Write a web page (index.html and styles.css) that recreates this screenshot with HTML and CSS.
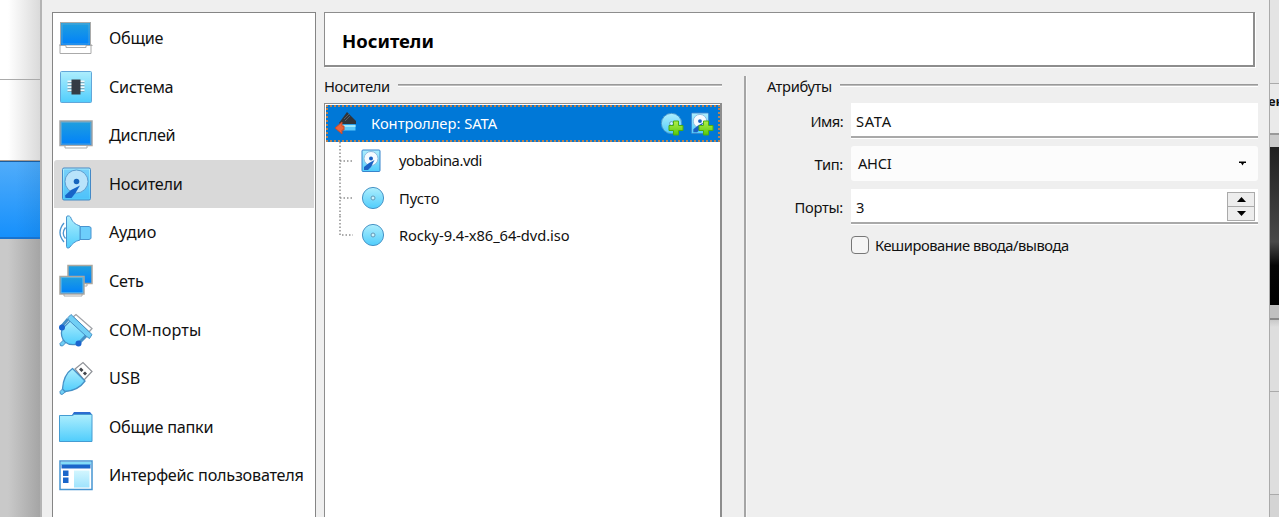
FILE: index.html
```html
<!DOCTYPE html>
<html lang="ru">
<head>
<meta charset="utf-8">
<title>Носители</title>
<link rel="stylesheet" href="styles.css">
</head>
<body>
<svg class="defs" width="0" height="0">
  <defs>
    <linearGradient id="screen" x1="0" y1="0" x2="0" y2="1"><stop offset="0" stop-color="#20a0dd"/><stop offset="1" stop-color="#0080fb"/></linearGradient>
    <linearGradient id="cyan" x1="0" y1="0" x2="0" y2="1"><stop offset="0" stop-color="#aeeefd"/><stop offset="1" stop-color="#50cdfc"/></linearGradient>
    <linearGradient id="green" x1="0" y1="0" x2="0" y2="1"><stop offset="0" stop-color="#b4ef4c"/><stop offset="1" stop-color="#55c80c"/></linearGradient>
    <symbol id="disc" viewBox="0 0 24 24"><circle cx="12" cy="12" r="10.6" fill="url(#cyan)" stroke="#4994c6"/><circle cx="12" cy="12" r="2" fill="#c9f3ff" stroke="#6599b5"/></symbol>
    <symbol id="hdd" viewBox="0 0 20 24"><rect x="1" y="1" width="18" height="21.5" rx="1" fill="url(#cyan)" stroke="#3984cc"/><circle cx="10" cy="9.5" r="7" fill="#f4fbff" stroke="#8ebde0"/><circle cx="10" cy="9.5" r="2" fill="#1b62c4"/><path d="M13.500 11L8 14 3 18v3h4l3-3z" fill="#1b62c4"/></symbol>
    <symbol id="plus" viewBox="0 0 16 16"><path d="M5.500 1h5v4.500h4.500v5h-4.500V15h-5v-4.500H1v-5h4.500z" fill="url(#green)" stroke="#4aad13"/></symbol>
  </defs>
</svg>
<div class="desktop">
  <div class="back-left"><div class="bl-top"></div><div class="bl-mid"></div><div class="bl-blue"></div><div class="bl-gray"></div></div>
  <main class="dialog">
    <nav class="sidebar">
      <div class="item"><svg width="36" height="36"><path d="M2 24v9.500h31V24" fill="#fff" stroke="#aaa"/><rect x="2.500" y="2.500" width="30" height="23" fill="url(#screen)" stroke="#a9aaa9"/><rect x="4" y="4" width="27" height="20" fill="none" stroke="#62a9d3" stroke-width=".7"/><path d="M1.500 25.500H8v2h20v-2h6.500" fill="#fff" stroke="#aaa"/></svg><span class="t1">Общие</span></div>
      <div class="item"><svg width="36" height="36"><rect x="2.500" y="2.500" width="31" height="31" rx="1" fill="url(#cyan)" stroke="#62a6d9"/><path d="M9.500 12.500h17M9.500 15.500h17M9.500 18.500h17M9.500 21.500h17" stroke="#f4f8fa" stroke-width="2"/><path d="M9.500 13.500h17M9.500 16.500h17M9.500 19.500h17M9.500 22.500h17" stroke="#6f9aaf" stroke-width=".8"/><rect x="13.500" y="10.500" width="9" height="15" fill="#343c45"/></svg><span class="t2">Система</span></div>
      <div class="item"><svg width="36" height="36"><rect x="2" y="4" width="32" height="24.500" fill="url(#screen)" stroke="#a6a6a6" stroke-width="1.500"/><rect x="3.500" y="5.500" width="29" height="21.500" fill="none" stroke="#62a9d3" stroke-width=".7"/><path d="M7 28.500v2.500h22v-2.500z" fill="#fff" stroke="#aaa"/></svg><span class="t3">Дисплей</span></div>
      <div class="item selected"><svg width="36" height="36"><rect x="4.500" y="2" width="28" height="32" rx="1.500" fill="url(#cyan)" stroke="#4489c6"/><rect x="6" y="3.500" width="25" height="29" fill="#4ab8f8" opacity=".55"/><circle cx="18.500" cy="15.500" r="11.500" fill="#b9e3fb" stroke="#5d9ed0"/><circle cx="18.500" cy="15.500" r="2.800" fill="#1764bd"/><path d="M22 19.500l-9 4.500-6 5.500.5 2.500h6l4-5z" fill="#1764c8"/></svg><span class="t4">Носители</span></div>
      <div class="item"><svg width="36" height="36"><path d="M22 12.500h9l2 1v11l-2 1h-9z" fill="#6dcefb" stroke="#4994cf"/><path d="M8.500 3c0-1.500 3-1.500 4 0 2 5 4 7 9.500 9v14c-5 1-8 4-10 7-1 1.500-3.500 1.500-3.500-.5z" fill="url(#cyan)" stroke="#4994cf"/><path d="M6 9q-8 9.500 0 19M7.500 13.500q-4.500 6 0 11" fill="none" stroke="#4994cf" stroke-width="1.300"/></svg><span class="t5">Аудио</span></div>
      <div class="item"><svg width="36" height="36"><path d="M15 21.500v1.500h14v-2.500" fill="#fff" stroke="#aaa"/><rect x="10" y="2.500" width="24" height="18" fill="url(#screen)" stroke="#aaa79f" stroke-width="1.500"/><path d="M6 31v2h18v-2" fill="#fff" stroke="#aaa"/><rect x="2" y="13.500" width="24" height="17.500" fill="url(#screen)" stroke="#aaa79f" stroke-width="1.500"/><rect x="3.200" y="14.700" width="21.600" height="15" fill="none" stroke="#68bce7" stroke-width=".7"/></svg><span class="t6">Сеть</span></div>
      <div class="item"><svg width="36" height="36"><path d="M15 5l3-2.500L34 16.500l-3 3.500z" fill="#fff" stroke="#a0a3a8" stroke-width="1.300"/><path d="M5.500 28L8 30.500 4.500 34q-3 .5-2.500-2.500z" fill="#71cff5" stroke="#4590c6"/><path d="M13 8L4 17q-2 8 3 13 5 4 13 2l8-9z" fill="url(#cyan)" stroke="#4590c6" stroke-width="1.300"/><path d="M10 5.500L13 2.500 34 22.500 31.500 26.500 28 24 10 7.500z" fill="#71cff5" stroke="#4590c6"/><path d="M10 7L4 14M28 24l-7 7" stroke="#4590c6" stroke-width="3"/><circle cx="4" cy="15.500" r="3" fill="#1a64cf"/><circle cx="20.500" cy="31.500" r="3" fill="#1a64cf"/></svg><span class="t7">COM-порты</span></div>
      <div class="item"><svg width="36" height="36"><path d="M17 9L25 2.500 34 11.500 26 20z" fill="#fff" stroke="#909399" stroke-width="1.200"/><path d="M23 7.500l2.500 2.500-2 2-2.500-2.500zM27 11.500l2 2-2 2-2.200-2.200z" fill="#42464c"/><path d="M5 28.500l3 3-4 3q-2.500 0-2-3z" fill="#71cff5" stroke="#4590c6"/><path d="M14.500 8.500L27 21C22 28 15 31 7 31.500L4.500 29C5 20 8 13 14.500 8.500z" fill="url(#cyan)" stroke="#4590c6" stroke-width="1.300"/></svg><span class="t8">USB</span></div>
      <div class="item"><svg width="36" height="36"><path d="M14 6l2-3h16l2 2.500V12H14z" fill="#2b6dd0"/><path d="M1.500 6.500h13l1.500-1h18v27h-32.500z" fill="url(#cyan)" stroke="#459cd2"/></svg><span class="t9">Общие папки</span></div>
      <div class="item"><svg width="36" height="36"><rect x="2" y="4" width="32" height="28.500" fill="#fff" stroke="#4595d2" stroke-width="1.500"/><path d="M3 5h30v3H3z" fill="#83dcf8"/><path d="M3.500 7.500h29v4h-29zM5 13.500h5.500V19H5zM5 20.500h5.500V26H5z" fill="#1b66ca"/><path d="M16 13.500h15.500v17H16z" fill="url(#cyan)" opacity=".55"/></svg><span class="t10">Интерфейс пользователя</span></div>
    </nav>
    <section class="content">
      <h1 class="title"><span>Носители</span></h1>
      <div class="columns">
        <section class="storage">
          <div class="legend"><span class="g1">Носители</span><i></i></div>
          <div class="tree">
            <div class="controller">
              <svg class="ctrl-icon" width="24" height="24"><path d="M5 12L13 1l9 9v3H6z" fill="#303439"/><path d="M10 8l5-5M11 10l5-5" stroke="#555c63"/><path d="M8 13.500h13.500v6H8z" fill="#5bc8fa"/><path d="M8 14h13.500v2H8z" fill="#9ee8fc"/><path d="M1 17l7-6v4h2v4H8v4z" fill="#ee6339" stroke="#c14b2d"/></svg>
              <span class="ctrl-name">Контроллер: SATA</span>
              <div class="actions">
                <svg width="25" height="24"><use href="#disc" x="0" y="0" width="23" height="23"/><use href="#plus" x="8" y="8" width="16" height="16"/></svg>
                <svg width="25" height="24"><use href="#hdd" x="0" y="0" width="20" height="23"/><use href="#plus" x="8" y="8" width="16" height="16"/></svg>
              </div>
            </div>
            <div class="leaf"><svg class="branch" width="14" height="38"><path d="M1 0v38M1 19h13"/></svg><svg class="media" width="24" height="24"><use href="#hdd" x="0" y="0" width="20" height="24"/></svg><span class="l1">yobabina.vdi</span></div>
            <div class="leaf"><svg class="branch" width="14" height="38"><path d="M1 0v38M1 19h13"/></svg><svg class="media" width="24" height="24"><use href="#disc"/></svg><span class="l2">Пусто</span></div>
            <div class="leaf"><svg class="branch" width="14" height="38"><path d="M1 0v19h13"/></svg><svg class="media" width="24" height="24"><use href="#disc"/></svg><span class="l3">Rocky-9.4-x86_64-dvd.iso</span></div>
          </div>
        </section>
        <div class="divider"></div>
        <section class="attributes">
          <div class="legend"><span class="g2">Атрибуты</span><i></i></div>
          <div class="form">
            <label><span class="f1">Имя:</span></label><div class="field"><span class="v1">SATA</span></div>
            <label><span class="f2">Тип:</span></label><div class="combo"><span class="v2">AHCI</span><svg width="8" height="5"><path d="M1 .5h7v1.500H6L4.500 4.500 3 2H1z"/></svg></div>
            <label><span class="f3">Порты:</span></label><div class="field"><span>3</span><div class="spin"><b><svg width="9" height="5"><path d="M4.500 0L9 5H0z"/></svg></b><b><svg width="9" height="5"><path d="M0 0h9L4.500 5z"/></svg></b></div></div>
          </div>
          <div class="check"><i></i><span class="c1">Кеширование ввода/вывода</span></div>
        </section>
      </div>
    </section>
  </main>
  <div class="back-right"><div class="br-top"></div><div class="br-label">ен</div><div class="br-bar"></div><div class="br-black"></div><div class="br-foot"></div><div class="br-a"></div><div class="br-b"></div><div class="br-c"></div></div>
</div>
</body>
</html>
```
FILE: styles.css
```css
* { box-sizing: border-box; }
body { margin: 0; overflow: hidden; font-family: "Noto Sans", sans-serif; color: #111; }
.defs { position: absolute; }
svg { display: block; flex: none; }
span { white-space: nowrap; }
.desktop { display: flex; width: 1279px; height: 517px; background: #efefef; }

.back-left { width: 40px; display: flex; flex-direction: column; flex: none; }
.bl-top { height: 80px; background: linear-gradient(90deg, #fff 20%, #dadada); border-bottom: 1px solid #aaa; }
.bl-mid { height: 81px; background: linear-gradient(90deg, #fff 20%, #dadada); border-bottom: 1px solid #aa9c90; }
.bl-blue { height: 78px; background: linear-gradient(90deg, transparent 40%, #0050901f), linear-gradient(#50acfa, #1690fc); border-top: 1px solid #1b5d9f; border-bottom: 2px solid #1873cf; }
.bl-gray { flex: 1; background: linear-gradient(90deg, #c9c9c9 20%, #a5a5a5); }

.dialog { width: 1229px; flex: none; display: flex; align-items: stretch; padding: 12px 10px 0 10px; border-left: 2px solid #b4b4b4; background: #efefef; }
.sidebar { width: 264px; flex: none; padding: 0 1px; border: 1px solid #858585; border-bottom: 0; background: #fff; }
.item { display: flex; align-items: center; gap: 15px; height: 48.550px; padding-left: 4px; font-size: 16.200px; letter-spacing: -.25px; border-radius: 3px 0 0 0; }
.item:first-child { margin-top: 1px; }
.item.selected { background: #d9d9d9; }
.t5, .t7 { letter-spacing: .1px; }
.t8 { letter-spacing: 0; }
.t10 { letter-spacing: -.230px; }

.content { flex: 1; display: flex; flex-direction: column; min-width: 0; padding-left: 8px; }
.title { width: 931px; height: 55px; margin: 0; padding: 2px 0 0 17px; display: flex; align-items: center; background: #fff; border: 1px solid #8d8d8d; border-right-width: 2px; border-bottom-width: 2px; box-shadow: 1px 1px #fff; font-size: 18.500px; font-weight: 700; color: #000; }
.columns { flex: 1; display: flex; padding-top: 9px; font-size: 14.700px; }
.storage { width: 398px; display: flex; flex-direction: column; }
.legend { display: flex; align-items: center; height: 20px; gap: 8px; }
.legend i { flex: 1; height: 2px; margin-bottom: 3px; background: #999; border-bottom: 1px solid #bbb; box-shadow: 0 1px #fff; }
.g1, .g2 { letter-spacing: -.350px; }
.tree { flex: 1; margin-top: 7px; padding: 1px 0 0 1px; background: #fff; border: 1px solid #8d8d8d; border-right-width: 2px; border-bottom: 0; }
.controller { display: flex; align-items: center; height: 37px; padding-left: 6px; border: 2px dotted #b98150; background: #0078d7; color: #fff; }
.ctrl-icon { margin-top: -1px; }
.ctrl-name { margin: -2px 0 0 13px; }
.actions { display: flex; margin-left: auto; gap: 5px; padding-right: 3px; }
.leaf { display: flex; align-items: center; height: 37.400px; padding-left: 13px; }
.leaf span { margin-top: -1px; }
.branch { margin-right: 8px; }
.branch path { fill: none; stroke: #909090; stroke-width: 1.500; stroke-dasharray: 1.500 2; }
.media { margin-right: 14px; }
.l1 { letter-spacing: -.420px; }
.l3 { letter-spacing: -.080px; }
.divider { width: 3px; margin-left: 22px; background: #a5a5a5; border-right: 1px solid #f8f8f8; }
.attributes { width: 491px; margin-left: 20px; }
.form { display: grid; grid-template-columns: 76px 407px; column-gap: 8px; row-gap: 8px; grid-template-rows: 35px 35px 35px; padding-top: 7px; }
.form label { display: flex; justify-content: flex-end; align-items: center; letter-spacing: -.300px; }
.f1 { letter-spacing: -.600px; }
.field, .combo { display: flex; align-items: center; justify-content: space-between; padding: 0 3px 0 5px; background: #fff; }
.field { border-bottom: 2px solid #a9a9a9; height: 35px; padding-top: 3px; box-shadow: 0 1px #fff; }
.v1 { letter-spacing: .700px; }
.v2 { letter-spacing: -.300px; margin-top: -2px; }
.combo { background: #fcfcfc; border-radius: 3px; padding: 0 12px 0 7px; }
.spin { width: 28px; height: 29px; display: flex; flex-direction: column; border: 1px solid #aaa; margin-top: -2px; }
.spin b { flex: 1; display: flex; justify-content: center; align-items: center; background: #ededed; }
.spin b + b { border-top: 1px solid #aaa; }
.check { display: flex; align-items: center; gap: 6px; padding-left: 84px; margin-top: 11px; height: 20px; }
.check i { width: 18px; height: 18px; border: 1px solid #777; border-radius: 4px; background: #f5f5f5; }
.c1 { letter-spacing: -.450px; }

.back-right { width: 10px; flex: none; display: flex; flex-direction: column; overflow: hidden; border-left: 1px solid #aaa; background: #dedede; }
.back-right div { flex: none; }
.br-top { height: 84px; background: #e4e4e4; border-bottom: 1px solid #aaa; }
.br-label { height: 49px; padding-top: 8px; margin-left: -2px; font: 700 13px/19px "Noto Sans", sans-serif; background: #eaeaea; }
.br-bar { height: 14px; background: #cbcbcb; border-top: 2px solid #999; }
.br-black { height: 158px; background: linear-gradient(#202020, #494949 60%, #050505 75%, #000); }
.br-foot { height: 15px; background: #c0c0c0; border-bottom: 2px solid #888; }
.br-a { height: 72px; border-bottom: 1px solid #aaa; background: linear-gradient(#c9c9c9, #dedede 10%); }
.br-b { height: 103px; border-bottom: 1px solid #aaa; }
.br-c { height: 22px; background: #d4d4d4; }
```
